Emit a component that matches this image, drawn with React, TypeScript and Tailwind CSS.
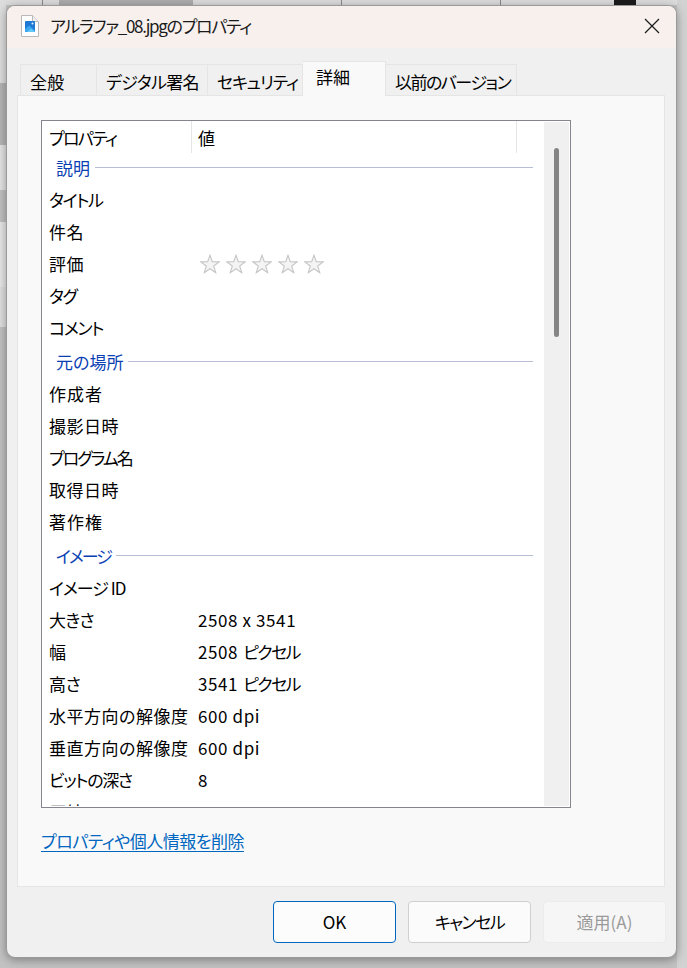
import React from "react";

const FONT = "[font-family:'Noto_Sans_CJK_JP','Noto_Sans',sans-serif] [font-feature-settings:'palt']";

type Row =
  | { type: "group"; label: string; tr?: string }
  | { type: "prop"; label: string; tr: string; value?: string; vtr?: string; unit?: string; stars?: boolean };

const KANA = "tracking-[-1.3px]";
const KANJI = "tracking-[0.5px]";

const ROWS: Row[] = [
  { type: "group", label: "説明" },
  { type: "prop", label: "タイトル", tr: KANA },
  { type: "prop", label: "件名", tr: KANJI },
  { type: "prop", label: "評価", tr: KANJI, stars: true },
  { type: "prop", label: "タグ", tr: KANA },
  { type: "prop", label: "コメント", tr: KANA },
  { type: "group", label: "元の場所" },
  { type: "prop", label: "作成者", tr: "tracking-[1px]" },
  { type: "prop", label: "撮影日時", tr: KANJI },
  { type: "prop", label: "プログラム名", tr: "tracking-[-2px]" },
  { type: "prop", label: "取得日時", tr: KANJI },
  { type: "prop", label: "著作権", tr: "tracking-[1px]" },
  { type: "group", label: "イメージ", tr: "tracking-[-2px]" },
  { type: "prop", label: "イメージ ID", tr: "tracking-[-1px]" },
  { type: "prop", label: "大きさ", tr: "tracking-[-0.8px]", value: "2508 x 3541", vtr: "tracking-[0.6px]" },
  { type: "prop", label: "幅", tr: KANJI, value: "2508", vtr: "tracking-[0.6px]", unit: "ピクセル" },
  { type: "prop", label: "高さ", tr: "tracking-[-0.3px]", value: "3541", vtr: "tracking-[0.6px]", unit: "ピクセル" },
  { type: "prop", label: "水平方向の解像度", tr: KANJI, value: "600 dpi", vtr: "tracking-[0.6px]" },
  { type: "prop", label: "垂直方向の解像度", tr: KANJI, value: "600 dpi", vtr: "tracking-[0.6px]" },
  { type: "prop", label: "ビットの深さ", tr: KANA, value: "8" },
  { type: "prop", label: "圧縮", tr: KANJI },
];

const TABS = [
  { label: "全般", w: "w-[77px] border-l", tr: "tracking-[0.3px]" },
  { label: "デジタル署名", w: "w-[111px]", tr: "tracking-[-0.7px]" },
  { label: "セキュリティ", w: "w-[95px]", tr: "tracking-[-1.2px]" },
  { label: "詳細", w: "w-[83px]", tr: "", active: true },
  { label: "以前のバージョン", w: "w-[131px]", tr: "tracking-[-1.5px]" },
];

function FileIcon() {
  return (
    <svg width="18" height="22" viewBox="0 0 18 22" className="shrink-0">
      <path d="M0.5 0.5H11.5L17.5 6.5V21.5H0.5Z" fill="#fdfdfd" stroke="#b9b9b9" />
      <path d="M11.5 0.5V6.5H17.5" fill="#eeeeee" stroke="#b9b9b9" />
      <rect x="4" y="6" width="10" height="11" rx="1" fill="#1f78d4" />
      <path d="M4 17V14L8 10.5L14 15.5V17Z" fill="#3aa6ee" />
      <path d="M6 17L10 13.5L14 17Z" fill="#66c8f6" />
      <circle cx="11.5" cy="8.5" r="1" fill="#e4f4ff" />
    </svg>
  );
}

function Star() {
  return (
    <svg width="20" height="20" viewBox="0 0 20 20" className="shrink-0">
      <path
        d="M10 1.2L12.3 7.8L19.2 7.9L13.7 12L15.7 18.7L10 14.7L4.3 18.7L6.3 12L0.8 7.9L7.7 7.8Z"
        fill="#f4f4f4"
        stroke="#c6c6c6"
        strokeWidth="1.1"
      />
    </svg>
  );
}

function PropRow({ row, first }: { row: Row; first: boolean }) {
  if (row.type === "group") {
    return (
      <div
        className={`flex h-[32px] shrink-0 items-center pl-[14px] pr-[12px] text-[17px] text-[#0a3fb4] ${
          first ? "mt-[-3px]" : "mt-[2px]"
        }`}
      >
        <span className={row.tr}>{row.label}</span>
        <span className="ml-[5px] mt-[-1px] h-px flex-1 bg-[#b6bdd4]" />
      </div>
    );
  }
  return (
    <div className="flex h-[32px] shrink-0 items-center pl-[7px] text-[17px] text-black">
      <span className={`w-[149px] shrink-0 whitespace-nowrap ${row.tr}`}>{row.label}</span>
      {row.stars ? (
        <div className="ml-[2px] flex gap-[6px]">
          <Star />
          <Star />
          <Star />
          <Star />
          <Star />
        </div>
      ) : (
        <span className="whitespace-nowrap">
          <span className={row.vtr}>{row.value}</span>
          {row.unit && <span className="ml-[5px] tracking-[-1.6px]">{row.unit}</span>}
        </span>
      )}
    </div>
  );
}

function PropList() {
  return (
    <div className="flex h-[688px] w-[530px] overflow-hidden border border-[#85858f] bg-white">
      <div className="flex h-[685px] w-[503px] shrink-0 flex-col overflow-hidden">
        <div className="flex h-[34px] shrink-0 pl-[7px] text-[17px] text-black">
          <span className="flex h-[32px] w-[142px] items-center pt-[2px] tracking-[-1.7px]">プロパティ</span>
          <span className="flex h-[32px] w-[326px] items-center border-x border-[#e5e5e5] pl-[6px] pt-[2px]">値</span>
        </div>
        {ROWS.map((row, i) => (
          <PropRow key={row.label} row={row} first={i === 0} />
        ))}
      </div>
      <div className="mb-[1px] ml-[-1px] mr-[1px] mt-[1px] flex-1 bg-[#f0f0f0] pl-[10px] pt-[26px]">
        <div className="h-[189px] w-[5px] rounded-full bg-[#858585]" />
      </div>
    </div>
  );
}

function DialogButton({
  label,
  tr,
  primary,
  disabled,
}: {
  label: string;
  tr?: string;
  primary?: boolean;
  disabled?: boolean;
}) {
  return (
    <button
      className={`flex h-[42px] w-[123px] items-center justify-center rounded-[4px] border text-[17px] ${tr ?? ""} ${
        primary
          ? "border-[#0067c0] bg-[#fcfcfc] text-black"
          : disabled
            ? "border-[#ececec] bg-[#f6f6f6] text-[#9a9a9a]"
            : "border-[#cfcfcf] bg-[#fbfbfb] text-black"
      }`}
    >
      {label}
    </button>
  );
}

export default function App() {
  return (
    <div className={`relative h-[968px] w-[687px] overflow-hidden bg-[#c2c2c2] pl-[6px] pt-[5px] ${FONT}`}>
      {/* desktop behind the dialog */}
      <div className="absolute left-0 top-0 h-[5px] w-full bg-[#dcdcdc]" />
      <div className="absolute left-[42px] top-0 h-[5px] w-px bg-[#8a8a8a]" />
      <div className="absolute left-[59px] top-0 h-[5px] w-[134px] bg-[#adadad]" />
      <div className="absolute left-[341px] top-0 h-[5px] w-px bg-[#8a8a8a]" />
      <div className="absolute left-[500px] top-0 h-[5px] w-px bg-[#8a8a8a]" />
      <div className="absolute left-[614px] top-0 h-[5px] w-[22px] bg-[#1c1c1c]" />
      <div className="absolute left-0 top-0 h-[83px] w-[6px] bg-[#dddddd]" />
      <div className="absolute left-0 top-[83px] h-[62px] w-[6px] bg-[#b5b5b5]" />
      <div className="absolute left-0 top-[145px] h-[45px] w-[6px] bg-[#e3e3e3]" />
      <div className="absolute left-0 top-[190px] h-[32px] w-[6px] bg-[#c0c0c0]" />
      <div className="absolute left-0 top-[222px] h-[65px] w-[6px] bg-[#e6e6e6]" />
      <div className="absolute left-0 top-[287px] h-[40px] w-[6px] bg-[#dfdfdf]" />
      <div className="absolute left-[677px] top-0 h-[968px] w-[10px] bg-[#d2d2d2]" />

      <div className="relative flex h-[953px] w-[671px] flex-col overflow-hidden rounded-[9px] border border-[#9a9a9a] bg-[#f0f0f0] shadow-[0_2px_10px_rgba(0,0,0,0.35)]">
        <div className="flex h-[42px] shrink-0 items-center bg-[#f7f0ed] pb-[2px] pl-[14px] pr-[16px]">
          <FileIcon />
          <span className="ml-[11px] text-[17px] tracking-[-1.3px] text-[#1a1a1a]">アルラファ_08.jpgのプロパティ</span>
          <svg width="16" height="16" viewBox="0 0 16 16" className="ml-auto">
            <path d="M1 1L15 15M15 1L1 15" stroke="#1a1a1a" strokeWidth="1.2" />
          </svg>
        </div>

        <div className="mt-[12px] flex h-[35px] shrink-0 items-end pl-[13px]">
          {TABS.map((tab) => (
            <div
              key={tab.label}
              className={`flex items-center whitespace-nowrap border-r border-[#e5e5e5] text-[17px] text-black ${tab.w} ${tab.tr} ${
                tab.active
                  ? "relative z-10 mb-[-1px] h-[35px] border-t bg-[#f9f9f9] pb-[4px] pl-[13px]"
                  : "h-[31px] border-t bg-[#f0f0f0] pl-[9px] pt-[3px]"
              }`}
            >
              {tab.label}
            </div>
          ))}
        </div>

        <div className="ml-[10px] flex h-[792px] w-[648px] shrink-0 flex-col border border-[#e5e5e5] bg-[#f9f9f9] pl-[23px] pt-[24px]">
          <PropList />
          <a className="mt-[20px] w-fit text-[17px] leading-[26px] tracking-[-0.5px] text-[#0067c0] underline underline-offset-[3px]">
            プロパティや個人情報を削除
          </a>
        </div>

        <div className="mt-[14px] flex justify-end gap-[12px] pr-[10px]">
          <DialogButton label="OK" primary />
          <DialogButton label="キャンセル" tr="tracking-[-1.5px]" />
          <DialogButton label="適用(A)" disabled />
        </div>
      </div>
    </div>
  );
}
